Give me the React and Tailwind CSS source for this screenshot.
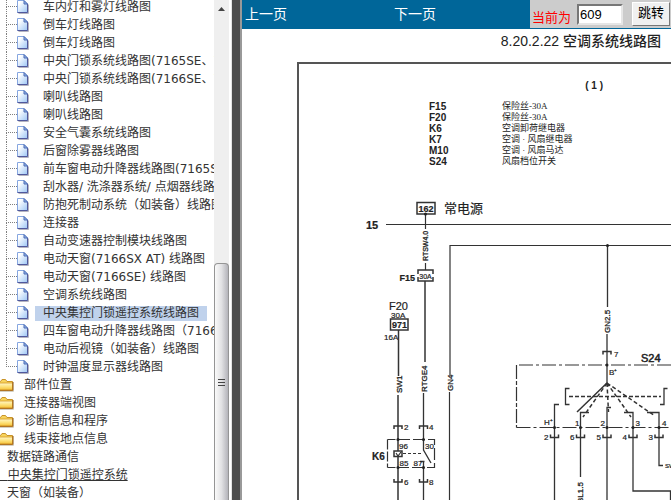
const leaves = [
  '车内灯和雾灯线路图',
  '倒车灯线路图',
  '倒车灯线路图',
  '中央门锁系统线路图(7165SE、7166SX)',
  '中央门锁系统线路图(7166SE、7166SX)',
  '喇叭线路图',
  '喇叭线路图',
  '安全气囊系统线路图',
  '后窗除雾器线路图',
  '前车窗电动升降器线路图(7165SE)',
  '刮水器/ 洗涤器系统/ 点烟器线路图',
  '防抱死制动系统（如装备）线路图',
  '连接器',
  '自动变速器控制模块线路图',
  '电动天窗(7166SX AT) 线路图',
  '电动天窗(7166SE) 线路图',
  '空调系统线路图',
  '中央集控门锁遥控系统线路图',
  '四车窗电动升降器线路图（7166SE）',
  '电动后视镜（如装备）线路图',
  '时钟温度显示器线路图',
];
const selected = 17;

const folders = ['部件位置', '连接器端视图', '诊断信息和程序', '线束接地点信息'];

const parts = [
  ['F15', '保险丝-30A'],
  ['F20', '保险丝-30A'],
  ['K6', '空调卸荷继电器'],
  ['K7', '空调 · 风扇继电器'],
  ['M10', '空调 · 风扇马达'],
  ['S24', '风扇档位开关'],
];

function PageIcon() {
  return (
    <svg className="w-3 h-[14px] shrink-0" viewBox="0 0 12 14" aria-hidden="true">
      <defs>
        <linearGradient id="sheet" x1="0" y1="0" x2="1" y2="1">
          <stop offset="0.2" stopColor="#ffffff" />
          <stop offset="1" stopColor="#9cc6f6" />
        </linearGradient>
      </defs>
      <path d="M1.5 13.5h10V4.5" fill="none" stroke="#b4b4c0" />
      <path d="M0.5 0.5h6.5l3.5 3.5v8.5h-10z" fill="url(#sheet)" stroke="#86a6e0" />
      <path d="M10.5 4v8.5h-10" fill="none" stroke="#50589c" />
      <path d="M7 0.5v3.5h3.5z" fill="#8fb4ea" stroke="#4f6cb4" />
    </svg>
  );
}

function FolderIcon() {
  return (
    <svg className="w-[14px] h-[14px] shrink-0" viewBox="0 0 14 14" aria-hidden="true">
      <defs>
        <linearGradient id="folder" x1="0" y1="0" x2="0" y2="1">
          <stop offset="0" stopColor="#fff7c8" />
          <stop offset="0.5" stopColor="#fde27a" />
          <stop offset="1" stopColor="#f5bd30" />
        </linearGradient>
      </defs>
      <path d="M0 13.3h13.5V4" fill="none" stroke="#c9c4b4" />
      <path d="M-1 3.5h1.5l1.5-2h3.5l1.5 2h5.5v8.5h-13.5z" fill="#f7d35c" stroke="#c8932a" />
      <path d="M-1 5h13.5v7.3h-13.5z" fill="url(#folder)" stroke="#d49a25" strokeWidth="0.8" />
      <path d="M-1 12.3h13.8V4" fill="none" stroke="#a8681c" />
    </svg>
  );
}

function Leaf({ label, active, last }) {
  return (
    <li className="flex h-[18px] items-center">
      <span className="w-[17px] h-full pl-[6px] shrink-0">
        <span className="block h-1/2 border-l border-b border-dotted border-[#808080]" />
        {!last && <span className="block h-1/2 border-l border-dotted border-[#808080]" />}
      </span>
      <PageIcon />
      <a href="#" className={`ml-1.5 px-2 leading-[15px] ${active ? 'bg-[#c0d2ec]' : ''}`}>{label}</a>
    </li>
  );
}

function Sidebar() {
  return (
    <aside className="flex w-[232px] shrink-0 border-r border-[#e3e3e3] text-[12px] text-[#333] whitespace-nowrap font-['DejaVu_Sans','Noto_Sans_CJK_SC',sans-serif]">
      <nav className="flex-1 min-w-0 overflow-hidden">
        <ul className="-mt-0.5">
          {leaves.map((label, i) => (
            <Leaf key={i} label={label} active={i === selected} last={i === leaves.length - 1} />
          ))}
          {folders.map(label => (
            <li key={label} className="flex h-[18px] items-center">
              <FolderIcon />
              <a href="#" className="ml-0.5 px-2 leading-4">{label}</a>
            </li>
          ))}
          <li className="h-[18px] leading-[18px] pl-[7px]"><a href="#">数据链路通信</a></li>
          <li className="h-[18px] leading-[18px]"><a href="#" className="underline">{'\u00a0\u00a0'}中央集控门锁遥控系统</a></li>
          <li className="h-[18px] leading-[18px] pl-[7px]"><a href="#">天窗（如装备）</a></li>
        </ul>
      </nav>
      <div className="flex flex-col w-[15px] mr-0.5 shrink-0 bg-[#efefef]">
        <div className="flex h-[263px] shrink-0 justify-center pt-[7px]">
          <svg className="w-[7px] h-1" viewBox="0 0 7 4" aria-hidden="true">
            <path d="M0 4L3.5 0L7 4z" fill="#444" />
          </svg>
        </div>
        <div className="flex flex-1 flex-col items-center gap-0.5 pt-[115px] rounded-t-sm border border-b-0 border-[#959595] bg-linear-to-r from-[#fafafa] via-[#e2e2e4] to-[#b4b4ba]">
          <span className="w-[7px] h-px bg-[#444]" />
          <span className="w-[7px] h-px bg-[#444]" />
          <span className="w-[7px] h-px bg-[#444]" />
        </div>
      </div>
    </aside>
  );
}

function Toolbar() {
  return (
    <header className="flex h-[29px] shrink-0 bg-[#006699] text-white text-[14px] font-['Noto_Sans_CJK_SC',sans-serif]">
      <div className="grid flex-1 grid-cols-[149px_1fr] pl-[3px] leading-[26px]">
        <a href="#">上一页</a>
        <a href="#">下一页</a>
      </div>
      <form className="flex w-[141px] h-7 shrink-0 pl-0.5 bg-[#cccccc] whitespace-nowrap" onSubmit={e => e.preventDefault()}>
        <label htmlFor="page" className="w-[45px] pt-2 text-[13px] leading-[18px] text-[#ff0000]">当前为</label>
        <input
          id="page"
          defaultValue="609"
          className="w-[46px] h-[21px] mt-1 px-px bg-white text-black text-[13px] border-2 border-t-[#777] border-l-[#777] border-r-[#e6e6e6] border-b-[#e6e6e6] font-['Liberation_Sans',sans-serif]"
        />
        <button className="w-[38px] h-[24px] ml-[9px] mt-0.5 bg-[#f0f0f0] text-black text-[13px] leading-4 pb-1 border border-t-white border-l-white border-r-[#777] border-b-[#777]">
          跳转
        </button>
      </form>
    </header>
  );
}

// Terminal clip: opens downwards, or upwards when up is set
function Clip({ x, y, up }) {
  return <path d={up ? `M${x - 4} ${y - 3}v3h8v-3` : `M${x - 4} ${y + 3}v-3h8v3`} strokeWidth="1.5" />;
}

function Label({ x, y, size = 8, bold, children, ...rest }) {
  return (
    <text x={x} y={y} fontSize={size} fontWeight={bold ? 700 : 400} fill="#222" stroke="#222" strokeWidth="0.2" {...rest}>
      {children}
    </text>
  );
}

function WireName({ x, y, size = 8, children }) {
  return (
    <text transform={`translate(${x} ${y}) rotate(-90)`} fontSize={size} fill="#222" stroke="#222" strokeWidth="0.3">
      {children}
    </text>
  );
}

const dots = [
  [425.5, 214], [607.5, 245.5],
  [398, 439.5], [423.5, 439.5], [398, 467.5], [423.5, 467.5],
  [607, 365], [554.5, 427.5], [580.5, 427.5], [607, 427.5], [633, 427.5], [659, 427.5],
];

function Diagram() {
  return (
    <svg
      className="block w-[372px] h-[333px] font-['Liberation_Sans','Noto_Sans_CJK_SC',sans-serif]"
      viewBox="299 167 372 333"
      fill="none"
      stroke="#333"
      strokeWidth="1.2"
      role="img"
      aria-label="空调系统线路图"
    >
      {/* supply */}
      <rect x="417" y="202.5" width="18" height="11.5" strokeWidth="1.5" />
      <Label x="426" y="211.5" size={9} bold textAnchor="middle">162</Label>
      <Label x="444" y="213" size={13}>常电源</Label>
      <Label x="366" y="229" size={11} bold>15</Label>
      <path d="M386 224.5H671" />
      <path d="M425.5 214v15M425.5 263v7" />
      <WireName x={428} y={261} size={7}>RTSW4.0</WireName>

      {/* fuse F15 */}
      <path d="M418 274v-4h15v4M418 277v4h15v-4" strokeWidth="1.5" />
      <Label x="425.5" y="278.5" size={7} textAnchor="middle">30A</Label>
      <Label x="399.5" y="280.5" size={9} bold>F15</Label>
      <path d="M425 281V362" strokeWidth="1.5" />
      <WireName x={427} y={392}>RTGE4</WireName>

      {/* fuse F20 */}
      <Label x="389" y="310" size={11}>F20</Label>
      <Label x="391" y="317.5" size={8}>30A</Label>
      <rect x="390.5" y="319" width="17.5" height="11" strokeWidth="1.5" />
      <Label x="399.5" y="328" size={9} bold textAnchor="middle">971</Label>
      <Label x="384" y="339.5" size={8}>16A</Label>
      <path d="M398.5 330V376M398 395V500" strokeWidth="1.5" />
      <WireName x={402} y={393}>SW1</WireName>

      {/* GN4 feed */}
      <path d="M671 245.5H450V375M449.5 392V500" />
      <WireName x={453} y={391}>GN4</WireName>

      {/* relay K6 */}
      <Clip x={398} y={426} />
      <Clip x={423.5} y={426} />
      <Label x="404" y="430">2</Label>
      <Label x="429" y="430">4</Label>
      <path d="M423.5 393V450L431 463M420 461.5h4.5M423.5 461V500" strokeWidth="1.3" />
      <path d="M387.5 439.5H398M387.5 467.5H398" strokeDasharray="8 3" />
      <path d="M387.5 439.5V467.5" strokeDasharray="10 2" />
      <path d="M398 439.5H434.5V467.5H398" strokeDasharray="12 3" />
      <rect x="394" y="451" width="8" height="5.5" strokeWidth="1.5" fill="white" />
      <path d="M396 453l2 3 3-4" />
      <path d="M403 453.5H422" strokeDasharray="3 2" />
      <Label x="399" y="448.5">96</Label>
      <Label x="425" y="448.5">30</Label>
      <Label x="399.5" y="466">85</Label>
      <Label x="413.5" y="466">87</Label>
      <Label x="372" y="459.5" size={10} bold>K6</Label>
      <Clip x={398} y={482} up />
      <Clip x={423.5} y={482} up />
      <Label x="404" y="485">6</Label>
      <Label x="429" y="485">8</Label>

      {/* switch S24 */}
      <path d="M607.5 245.5V307M607 334V383" strokeWidth="1.3" />
      <WireName x={610} y={333}>GN2.5</WireName>
      <Clip x={607} y={351.5} />
      <Label x="614" y="357">7</Label>
      <Label x="641" y="362" size={11} strokeWidth="0.5">S24</Label>
      <Label x="609" y="374.5">B⁺</Label>
      <path d="M671 365H516.5" strokeDasharray="14 3 3 3" />
      <path d="M516.5 365V427.5" strokeDasharray="14 2 4 2" />
      <path d="M516.5 427.5H671" strokeDasharray="14 3 3 3" />
      <path d="M607 383L577 412" strokeWidth="1.5" />
      <path d="M607 383L583 417M607 383L608.5 412M607 383L631 417M607 383L655 416" strokeWidth="1.5" strokeDasharray="4 2.5" />
      <path d="M569.5 388.5h-4v16h4M667.5 388.5h-3.5v16h-4" strokeWidth="1.3" />
      <path d="M569 396.5H661" strokeDasharray="4 2" strokeWidth="1.3" />
      <path
        d="M559 404.5h-4.5V500M589 412.5h-8.5V477M611 407.5h-4V500M624 412.5h9V491H670.5V500M647 412.5h12V465.5h4"
        strokeWidth="1.3"
      />
      <Label x="544" y="425">H⁺</Label>
      <Label x="575" y="426">1</Label>
      <Label x="600.5" y="426">2</Label>
      <Label x="635.5" y="426">3</Label>
      <Label x="662" y="426">4</Label>
      {[[554.5, 2], [580.5, 6], [607, 5], [633, 4], [659, 3]].map(([x, n]) => (
        <g key={x}>
          <Clip x={x} y={437.5} up />
          <Label x={x - 10.5} y="439.5">{n}</Label>
        </g>
      ))}
      <WireName x={583} y={503}>BL1.5</WireName>
      <Label x="665" y="467.5" size={6}>SW1</Label>

      {dots.map(([x, y]) => <circle key={`${x}-${y}`} cx={x} cy={y} r="1.5" fill="#222" stroke="none" />)}
    </svg>
  );
}

export default function App() {
  return (
    <div className="flex h-screen overflow-hidden bg-white">
      <Sidebar />
      <div className="w-[10px] shrink-0 bg-[#4d4d4d] border-r-2 border-[#999]" />
      <div className="flex flex-1 min-w-0 flex-col">
        <Toolbar />
        <main className="flex-1 min-h-0 overflow-hidden text-[#222] font-['Liberation_Sans','Noto_Sans_CJK_SC',sans-serif]">
          <h1 className="h-[33px] pr-[10px] text-right text-[14px] leading-6 font-medium">8.20.2.22 空调系统线路图</h1>
          <section className="ml-[55px] border-t-2 border-l-2 border-[#555]">
            <p className="h-[37px] pt-4 pr-[68px] text-right text-[10px] leading-3 font-bold">( 1 )</p>
            <dl className="ml-[130px]">
              {parts.map(([code, name]) => (
                <div key={code} className="flex h-[11px] leading-[11px]">
                  <dt className="w-[73px] text-[10px] font-bold">{code}</dt>
                  <dd className="text-[9px] font-['Liberation_Serif','Noto_Sans_CJK_SC',serif]">{name}</dd>
                </div>
              ))}
            </dl>
            <Diagram />
          </section>
        </main>
      </div>
    </div>
  );
}
